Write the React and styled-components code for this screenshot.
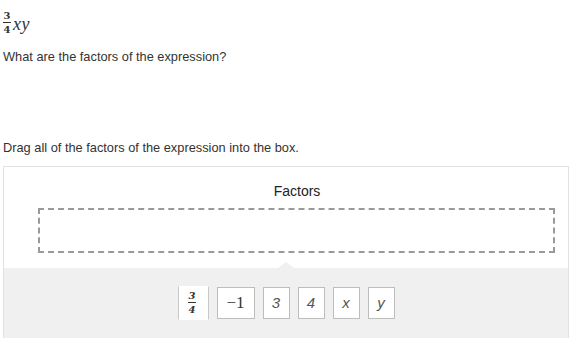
import styled, { createGlobalStyle } from "styled-components";

const Global = createGlobalStyle`
  body {
    margin: 0;
    background: #fff;
  }
`;

const Page = styled.div`
  padding: 12px 3px 0;
  font-family: "Liberation Sans", Arial, sans-serif;
  font-size: 12.8px;
  line-height: 16px;
  color: #333;
`;

const Expression = styled.div`
  display: flex;
  align-items: center;
  height: 21px;
`;

const Frac = styled.span`
  display: inline-flex;
  flex-direction: column;
  align-items: center;
  font-family: "DejaVu Serif", "Liberation Serif", serif;
  font-weight: bold;
  font-size: ${(p) => p.size || 10}px;
  line-height: 1;
  color: #333;
  margin-right: 2px;
`;

const FracBar = styled.span`
  display: block;
  width: 100%;
  min-width: 8px;
  height: 1px;
  background: #333;
  margin: 1px 0 2px;
`;

const MathVar = styled.span`
  font-family: "Liberation Serif", "Times New Roman", serif;
  font-style: italic;
  font-size: 18px;
  color: #333;
  margin-top: 3px;
  letter-spacing: 0.5px;
`;

const Prompt = styled.p`
  margin: ${(p) => p.top}px 0 0;
`;

const Panel = styled.div`
  margin-top: 10px;
  border: 1px solid #e2e2e2;
  border-bottom: none;
  height: 172px;
  display: flex;
  flex-direction: column;
`;

const Target = styled.div`
  height: 101px;
  padding-top: 15px;
  box-sizing: border-box;
`;

const Title = styled.div`
  text-align: center;
  font-size: 14px;
  line-height: 18px;
  color: #222;
  padding-left: 22px;
`;

const DropBox = styled.div`
  margin: 8px 13px 0 34px;
  height: 45px;
  box-sizing: border-box;
  border: 2px dashed #9a9a9a;
`;

const Tray = styled.div`
  position: relative;
  flex: 1;
  background: #f0f0f0;
  display: flex;
  justify-content: center;
  align-items: flex-start;
  gap: 8px;
  padding-top: 18px;

  &::before {
    content: "";
    position: absolute;
    top: -6px;
    left: 50%;
    margin-left: -8px;
    border-left: 8px solid transparent;
    border-right: 8px solid transparent;
    border-bottom: 6px solid #f0f0f0;
  }
`;

const Tile = styled.div`
  box-sizing: border-box;
  background: #fff;
  width: ${(p) => p.w || 27}px;
  height: ${(p) => (p.open ? 34 : 32)}px;
  margin-top: ${(p) => (p.open ? 0 : 1)}px;
  border: 1px solid ${(p) => (p.open ? "transparent" : "#bdbdbd")};
  border-left-color: ${(p) => (p.open ? "#c8c8c8" : "#bdbdbd")};
  border-right-color: ${(p) => (p.open ? "#c8c8c8" : "#bdbdbd")};
  display: flex;
  align-items: center;
  justify-content: center;
  font-size: 15px;
  font-style: italic;
  color: #555;
`;

const SerifNum = styled.span`
  font-family: "Liberation Serif", "Times New Roman", serif;
  font-style: normal;
  font-size: 17px;
  color: #333;
`;

export default function App() {
  return (
    <>
      <Global />
      <Page>
        <Expression>
          <Frac size={10}>
            <span>3</span>
            <FracBar />
            <span>4</span>
          </Frac>
          <MathVar>xy</MathVar>
        </Expression>
        <Prompt top={16}>What are the factors of the expression?</Prompt>
        <Prompt top={75}>Drag all of the factors of the expression into the box.</Prompt>
        <Panel>
          <Target>
            <Title>Factors</Title>
            <DropBox />
          </Target>
          <Tray>
            <Tile w={31} open>
              <Frac size={10}>
                <span>3</span>
                <FracBar />
                <span>4</span>
              </Frac>
            </Tile>
            <Tile w={38}>
              <SerifNum>−1</SerifNum>
            </Tile>
            <Tile>3</Tile>
            <Tile>4</Tile>
            <Tile>x</Tile>
            <Tile>y</Tile>
          </Tray>
        </Panel>
      </Page>
    </>
  );
}
